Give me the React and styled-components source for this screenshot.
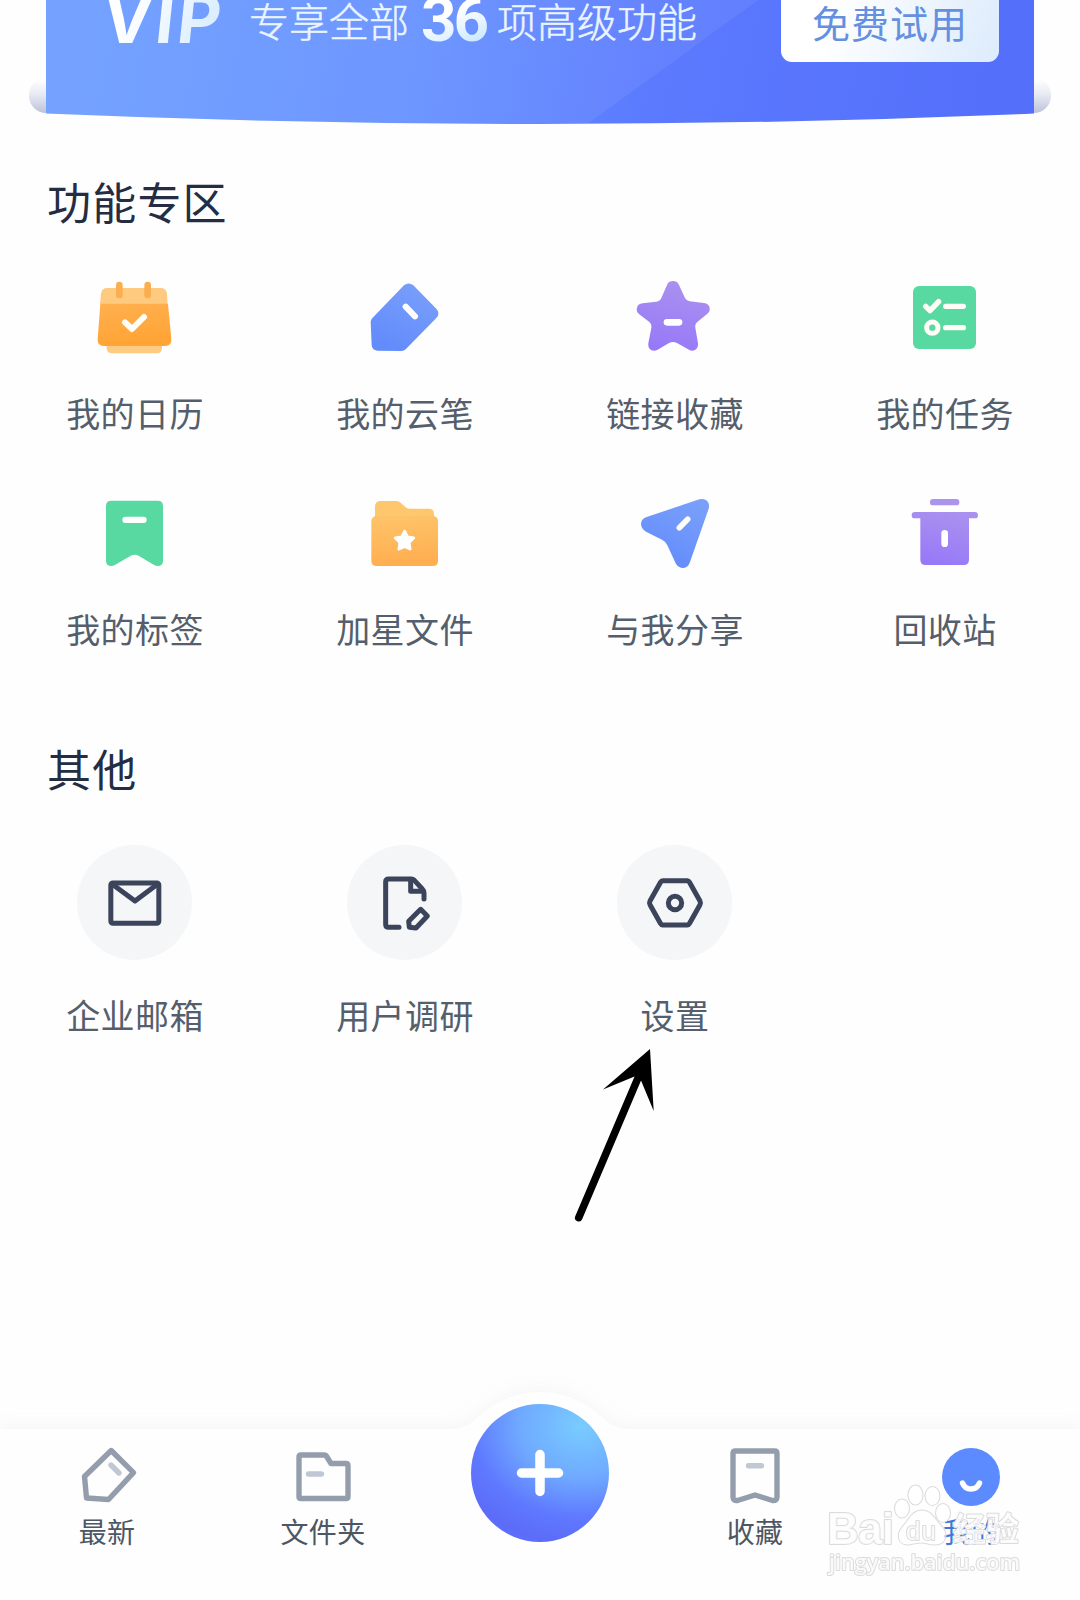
import React from 'react';
import styled, { createGlobalStyle } from 'styled-components';

const GlobalStyle = createGlobalStyle`
  * {
    box-sizing: border-box;
  }

  body {
    margin: 0;
    background: #fefefe;
    font-family: "Noto Sans CJK SC", sans-serif;
  }
`;

const Page = styled.div`
  position: relative;
  display: flex;
  flex-direction: column;
  width: 1080px;
  height: 1600px;
  overflow: hidden;
  background: #fefefe;
`;

const BannerWrap = styled.div`
  position: relative;
  height: 124px;
  padding: 0 46px;

  &::before,
  &::after {
    content: "";
    position: absolute;
    top: 78px;
    width: 34px;
    height: 35px;
    border-radius: 17px;
    background: linear-gradient(#fefefe 5%, #e9ebf4 45%, #bcc3d8);
  }

  &::before {
    left: 29px;
  }

  &::after {
    right: 29px;
  }
`;

const Banner = styled.div`
  position: relative;
  z-index: 1;
  display: flex;
  align-items: flex-start;
  height: 124px;
  padding: 0 35px 0 57px;
  background:
    linear-gradient(144deg, rgba(255, 255, 255, 0.06) 0 61.4%, transparent 61.5%),
    linear-gradient(100deg, #6c9cff 5%, #6490ff 38%, #5b7afe 62%, #5470fb 95%);
  clip-path: path("M0 0H988V113.5Q494 134.5 0 113.5Z");
`;

const VipLogo = styled.span`
  width: 147px;
  margin-top: -21px;
  font: 700 67px/80px Inter, sans-serif;
  letter-spacing: 3px;
  color: transparent;
  background: linear-gradient(110deg, #fff 20%, #d5ebff 80%);
  background-clip: text;
  transform: skewX(-6deg);
`;

const BannerText = styled.span`
  width: ${(props) => props.$width}px;
  margin-top: -10px;
  margin-left: -1px;
  font-size: 40px;
  font-weight: 300;
  line-height: 60px;
  white-space: nowrap;
  color: #eaf5ff;
  -webkit-text-stroke: 0.5px #eaf5ff;
`;

const BannerCount = styled.span`
  width: 77px;
  margin-top: -18px;
  font: 700 62px/76px Roboto, sans-serif;
  letter-spacing: -3px;
  color: transparent;
  background: linear-gradient(160deg, #fff 40%, #cfeaff 75%);
  background-clip: text;
`;

const TrialButton = styled.button`
  width: 218px;
  height: 82px;
  margin: -20px 0 0 auto;
  padding: 2px 0 0;
  border: 0;
  border-radius: 11px;
  background: linear-gradient(110deg, #fff 25%, #dcebfc);
  color: #6490df;
  font: 400 38px/70px "Noto Sans CJK SC", sans-serif;
  letter-spacing: 1px;
`;

const SectionTitle = styled.h2`
  margin: ${(props) => props.$top}px 0 0 47px;
  font-size: 44px;
  font-weight: 400;
  line-height: 60px;
  letter-spacing: 1.2px;
  color: #252d42;
`;

const Grid = styled.div`
  display: grid;
  grid-template-columns: repeat(4, 270px);
  margin-top: ${(props) => props.$top}px;
`;

const Item = styled.div`
  display: flex;
  flex-direction: column;
  align-items: center;
  height: 216px;
`;

const ItemIcon = styled.svg`
  width: 84px;
  height: 84px;
`;

const ItemLabel = styled.span`
  margin-top: ${(props) => props.$top}px;
  font-size: 34px;
  line-height: 50px;
  letter-spacing: 0.4px;
  color: #555e6c;
`;

const Circle = styled.div`
  display: flex;
  align-items: center;
  justify-content: center;
  width: 115px;
  height: 115px;
  margin-right: 1px;
  border-radius: 50%;
  background: #f4f6f8;

  svg {
    width: 64px;
    height: 64px;
    fill: none;
    stroke: #3b445b;
    stroke-width: 15;
    stroke-linecap: round;
    stroke-linejoin: round;
  }
`;

const Pointer = styled.svg`
  position: absolute;
  left: 570px;
  top: 1045px;
  width: 90px;
  height: 180px;
`;

const NavBar = styled.nav`
  position: relative;
  display: grid;
  grid-template-columns: repeat(5, 216px);
  height: 171px;
  margin-top: auto;
  background: #fefefe;
  filter: drop-shadow(0 -4px 8px rgba(70, 95, 130, 0.05));
`;

const NavBump = styled.svg`
  position: absolute;
  left: 450px;
  top: -37px;
  width: 180px;
  height: 38px;
`;

const NavItem = styled.div`
  display: flex;
  flex-direction: column;
  align-items: center;
  padding: 14px 2px 0 0;

  svg {
    width: 64px;
    height: 64px;
    fill: none;
    stroke-width: 5.4;
    stroke-linecap: round;
    stroke-linejoin: round;
  }
`;

const NavLabel = styled.span`
  margin-top: 4px;
  font-size: 28px;
  line-height: 40px;
  letter-spacing: 0.3px;
  color: ${(props) => (props.$active ? '#3f76d6' : '#4d5663')};
`;

const AddButton = styled.button`
  position: relative;
  top: -25px;
  display: flex;
  align-items: center;
  justify-content: center;
  justify-self: center;
  width: 138px;
  height: 138px;
  padding: 0;
  border: 0;
  border-radius: 50%;
  background: radial-gradient(ellipse 120% 100% at 80% 16%, #79ccff 0, #6fa9ff 38%, #5f79ff 66%, #5c6cf8 85%, #5b74ff 100%);
`;

const Watermark = styled.svg`
  position: absolute;
  left: 820px;
  top: 1480px;
  width: 210px;
  height: 105px;
  fill: rgba(255, 255, 255, 0.6);
  stroke: #dcdcdc;
  stroke-width: 1.1;

  text {
    fill: rgba(254, 254, 254, 0.85);
    stroke-width: 2;
    stroke-linejoin: round;
    paint-order: stroke;
  }
`;

const Gradients = () => (
  <svg width="0" height="0" style={{ position: 'absolute' }}>
    <defs>
      <linearGradient id="orange" x1="0" y1="0" x2="0.2" y2="1">
        <stop offset="0" stopColor="#ffb04f" />
        <stop offset="1" stopColor="#ffa435" />
      </linearGradient>
      <linearGradient id="folder" x1="0" y1="0" x2="0.1" y2="1">
        <stop offset="0" stopColor="#fec46a" />
        <stop offset="1" stopColor="#ffae50" />
      </linearGradient>
      <linearGradient id="blue" x1="0.8" y1="0" x2="0.3" y2="1">
        <stop offset="0" stopColor="#7aa0fa" />
        <stop offset="1" stopColor="#628bfc" />
      </linearGradient>
      <linearGradient id="purple" x1="0.7" y1="0" x2="0.4" y2="1">
        <stop offset="0" stopColor="#ab91ef" />
        <stop offset="1" stopColor="#9779f8" />
      </linearGradient>
    </defs>
  </svg>
);

const white = {
  fill: 'none',
  stroke: '#fffdf8',
  strokeLinecap: 'round',
  strokeLinejoin: 'round',
};

const features = [
  {
    label: '我的日历',
    viewBox: '159 48 252 252',
    icon: (
      <>
        <path d="M200 250H366V264Q366 280 350 280H217Q200 280 200 264Z" fill="#fdcb81" />
        <path d="M202 84H362Q379 84 381 101L383 133H180L183 101Q185 84 202 84Z" fill="#fdca80" />
        <path d="M181 131H384L394 238Q395 258 376 258H191Q172 258 173 238Z" fill="url(#orange)" />
        <rect x="228" y="65" width="20" height="50" rx="10" fill="#fcad4f" />
        <rect x="313" y="65" width="20" height="50" rx="10" fill="#fcad4f" />
        <path d="M255 187L276 207L312 171" strokeWidth="18" {...white} />
      </>
    ),
  },
  {
    label: '我的云笔',
    viewBox: '969 48 252 252',
    icon: (
      <>
        <path d="M1092 76Q1106 65 1120 76L1189 146Q1202 160 1189 174L1098 267Q1092 273 1084 273L1012 272Q996 271 995 256L992 186Q992 179 998 173Z" fill="url(#blue)" />
        <path d="M1097 140L1125 169" strokeWidth="18" {...white} />
      </>
    ),
  },
  {
    label: '链接收藏',
    viewBox: '99 48 252 252',
    icon: (
      <>
        <path d="M219 63Q231 63 236 73L255 114Q259 123 269 124L312 129Q326 131 329 143Q331 153 324 160L292 186Q284 193 286 203L294 250Q296 263 285 270Q276 275 267 269L231 249Q219 243 207 249L173 269Q163 275 153 270Q143 264 145 250L154 204Q156 193 148 186L116 161Q108 153 111 143Q114 131 128 130L169 125Q180 124 184 114L202 73Q207 63 219 63Z" fill="url(#purple)" />
        <rect x="191" y="177" width="56" height="20" rx="10" fill="#fff" />
      </>
    ),
  },
  {
    label: '我的任务',
    viewBox: '909 48 252 252',
    icon: (
      <>
        <rect x="939" y="78" width="189" height="189" rx="18" fill="#59d9a2" />
        <path d="M977 139L990 152L1016 125" strokeWidth="16" {...white} />
        <path d="M1037 139H1090M1037 203H1090" strokeWidth="16" {...white} />
        <circle cx="997" cy="203" r="17" strokeWidth="15" {...white} />
      </>
    ),
  },
  {
    label: '我的标签',
    viewBox: '159 66 252 252',
    icon: (
      <>
        <path d="M214 92H353Q369 92 369 108V272Q369 288 353 288Q348 288 341 284L297 258Q284 250 271 258L226 284Q219 288 214 288Q198 288 198 272V108Q198 92 214 92Z" fill="#59d9a2" />
        <rect x="247" y="140" width="73" height="19" rx="9.5" fill="#fff" />
      </>
    ),
  },
  {
    label: '加星文件',
    viewBox: '969 66 252 252',
    icon: (
      <>
        <path d="M1022 93H1069Q1077 93 1083 99L1097 112Q1101 116 1108 116H1166Q1182 116 1182 132V160H1005V110Q1005 93 1022 93Z" fill="#fec76d" />
        <path d="M1005 138H1182Q1194 141 1194 154V272Q1194 288 1178 288H1010Q994 288 994 272V154Q994 143 1005 138Z" fill="url(#folder)" />
        <path d="M1094 184L1102 201L1121 204L1107 217L1110 237L1094 229L1077 237L1080 217L1066 204L1085 201Z" fill="#fff" stroke="#fff" strokeWidth="9" strokeLinejoin="round" />
      </>
    ),
  },
  {
    label: '与我分享',
    viewBox: '99 66 252 252',
    icon: (
      <>
        <path d="M298 88Q312 84 321 92Q330 101 326 116L270 276Q264 294 247 294Q234 293 227 280L202 226Q197 214 186 209L138 185Q123 176 123 162Q124 146 140 141Z" fill="url(#blue)" />
        <path d="M238 173L263 148" strokeWidth="17" {...white} />
      </>
    ),
  },
  {
    label: '回收站',
    viewBox: '909 66 252 252',
    icon: (
      <>
        <rect x="990" y="87" width="88" height="19" rx="9.5" fill="#ab93ee" />
        <path d="M945 126H1124Q1134 126 1134 135.500Q1134 145 1124 145H1107V269Q1107 285 1091 285H977Q961 285 961 269V145H945Q935 145 935 135.500Q935 126 945 126Z" fill="url(#purple)" />
        <rect x="1024" y="180" width="20" height="51" rx="10" fill="#fff" />
      </>
    ),
  },
];

const others = [
  {
    label: '企业邮箱',
    viewBox: '188 421 192 192',
    icon: (
      <>
        <rect x="211.500" y="457" width="144" height="121" rx="6" />
        <path d="M216 461L284 511L351 461" />
      </>
    ),
  },
  {
    label: '用户调研',
    viewBox: '998 421 192 192',
    icon: (
      <>
        <path d="M1076 590H1045Q1036 590 1036 581V454Q1036 445 1045 445H1113Q1118 445 1122 449L1146 475Q1151 480 1151 487V505" />
        <path d="M1111 448V482H1147" />
        <path d="M1141 536L1161 556L1127 592L1107 590L1105 572Z" />
      </>
    ),
  },
  {
    label: '设置',
    viewBox: '248 122 192 192',
    icon: (
      <>
        <path d="M307 151H381Q385 151 387 155L419 212Q422 218 419 223L387 280Q385 284 381 284H307Q303 284 301 280L269 223Q266 218 269 212L301 155Q303 151 307 151Z" />
        <circle cx="344" cy="218" r="20" />
      </>
    ),
  },
];

const NavTab = ({ label, active, viewBox, children }) => (
  <NavItem>
    <svg viewBox={viewBox} stroke="#949dab">
      {children}
    </svg>
    <NavLabel $active={active}>{label}</NavLabel>
  </NavItem>
);

const App = () => {
  return (
    <Page>
      <GlobalStyle />
      <Gradients />

      <BannerWrap>
        <Banner>
          <VipLogo>VIP</VipLogo>
          <BannerText $width={172}>专享全部</BannerText>
          <BannerCount>36</BannerCount>
          <BannerText $width={200}>项高级功能</BannerText>
          <TrialButton>免费试用</TrialButton>
        </Banner>
      </BannerWrap>

      <SectionTitle $top={47}>功能专区</SectionTitle>
      <Grid $top={45}>
        {features.map((item) => (
          <Item key={item.label}>
            <ItemIcon viewBox={item.viewBox}>{item.icon}</ItemIcon>
            <ItemLabel $top={28}>{item.label}</ItemLabel>
          </Item>
        ))}
      </Grid>

      <SectionTitle $top={30}>其他</SectionTitle>
      <Grid $top={47}>
        {others.map((item) => (
          <Item key={item.label}>
            <Circle>
              <svg viewBox={item.viewBox}>{item.icon}</svg>
            </Circle>
            <ItemLabel $top={30}>{item.label}</ItemLabel>
          </Item>
        ))}
      </Grid>

      <Pointer viewBox="570 1045 90 180">
        <path d="M578.700 1217.700L638 1078" stroke="#000" strokeWidth="7.500" strokeLinecap="round" />
        <path d="M650 1049L603 1089.500L634.500 1076.500L641 1080.500L653.700 1111Z" />
      </Pointer>

      <NavBar>
        <NavBump viewBox="0 0 180 38">
          <path d="M0 38V37C15 37 22 31 33 21C50 7 68 0 90 0C112 0 130 7 147 21C158 31 165 37 180 37V38Z" fill="#fefefe" />
        </NavBump>
        <NavTab label="最新" viewBox="75 1443 64 64">
          <path d="M111.200 1450.500L133.500 1472.700L108.500 1499.500L86.500 1498L84.500 1476.500Z" />
          <path d="M111 1465L119 1473" stroke="#c0c8d4" />
        </NavTab>
        <NavTab label="文件夹" viewBox="291 1443 64 64">
          <path d="M301 1455H324Q326 1455 327 1457L331 1463.500H346Q348 1463.500 348 1465.500V1496.500Q348 1498.500 346 1498.500H301Q299 1498.500 299 1496.500V1457Q299 1455 301 1455Z" />
          <path d="M308.500 1474H321.500" stroke="#c0c8d4" />
        </NavTab>
        <AddButton>
          <svg width="48" height="48" viewBox="0 0 48 48" stroke="#fff" strokeWidth="9.500" strokeLinecap="round">
            <path d="M24 5.500V42.500M5.500 24H42.500" />
          </svg>
        </AddButton>
        <NavTab label="收藏" viewBox="723.500 1443 64 64">
          <path d="M736 1451H775Q777.500 1451 777.500 1453.500V1497Q777.500 1501 773 1500.500L755.500 1495L738 1500.500Q733.500 1501 733.500 1497V1453.500Q733.500 1451 736 1451Z" />
          <path d="M749 1465.700H762" stroke="#c0c8d4" />
        </NavTab>
        <NavTab label="我的" active viewBox="939.500 1443 64 64">
          <circle cx="971.500" cy="1477" r="29" fill="#5b8bff" stroke="none" />
          <path d="M963 1483C966 1491 977 1491 980 1483" stroke="#fff" />
        </NavTab>
      </NavBar>

      <Watermark viewBox="820 1480 210 105">
        <ellipse cx="902" cy="1508.500" rx="7.500" ry="9.500" />
        <ellipse cx="915.500" cy="1495" rx="7.500" ry="10" />
        <ellipse cx="932.500" cy="1496" rx="7.500" ry="9.500" />
        <ellipse cx="943" cy="1513" rx="7.500" ry="9.500" />
        <path d="M922 1510C932 1510 934 1518 941 1525C950 1534 946 1545 935 1545C928 1545 926 1543 922 1543C916 1543 912 1545 907 1545C897 1544 896 1534 902 1527C909 1519 912 1510 922 1510Z" />
        <text x="827" y="1544" fontSize="44" fontWeight="700" fontFamily="Liberation Sans, sans-serif" textLength="67">Bai</text>
        <text x="906" y="1540" fontSize="26" fontFamily="Liberation Sans, sans-serif" textLength="30">du</text>
        <text x="953" y="1541" fontSize="33" fontWeight="700" fontFamily="Noto Sans CJK SC, sans-serif">经验</text>
        <text x="829" y="1570" fontSize="22" fontWeight="600" fontFamily="Open Sans, sans-serif" textLength="191" lengthAdjust="spacingAndGlyphs">jingyan.baidu.com</text>
      </Watermark>
    </Page>
  );
};

export default App;
